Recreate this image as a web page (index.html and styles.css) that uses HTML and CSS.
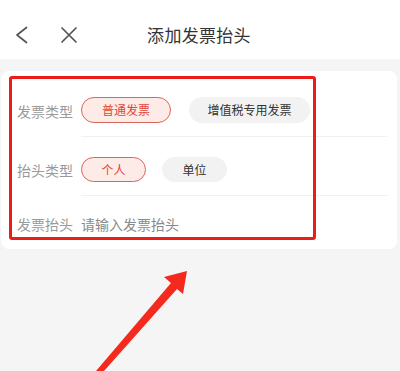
FILE: index.html
```html
<!DOCTYPE html>
<html lang="zh-CN">
<head>
<meta charset="utf-8">
<title>添加发票抬头</title>
<link rel="stylesheet" href="styles.css">
</head>
<body>
<div class="page">
  <header class="topbar">
    <div class="nav">
      <svg class="icon-back" width="14" height="18" viewBox="0 0 14 18"><polyline points="11.5,1.5 2,9 11.5,16.5" fill="none" stroke="#555" stroke-width="1.7" stroke-linecap="round" stroke-linejoin="round"/></svg>
      <svg class="icon-close" width="18" height="18" viewBox="0 0 18 18"><path d="M2 2 L16 16 M16 2 L2 16" fill="none" stroke="#555" stroke-width="1.7" stroke-linecap="round"/></svg>
    </div>
    <h1 class="title">添加发票抬头</h1>
    <div></div>
  </header>

  <section class="card">
    <div class="row row-type">
      <div class="label">发票类型</div>
      <div class="field gap18">
        <span class="pill wide active">普通发票</span>
        <span class="pill">增值税专用发票</span>
      </div>
    </div>
    <div class="row row-head">
      <div class="label">抬头类型</div>
      <div class="field gap16">
        <span class="pill small active">个人</span>
        <span class="pill small">单位</span>
      </div>
    </div>
    <div class="row row-input">
      <div class="label">发票抬头</div>
      <div class="field noline">
        <span class="placeholder">请输入发票抬头</span>
      </div>
    </div>
  </section>

  <div class="highlight"></div>
  <svg class="arrow" width="400" height="371" viewBox="0 0 400 371">
    <polygon points="187,271 164,277 171,283 96,371 104,371 177,289 183,294" fill="#f42a1e"/>
  </svg>
</div>
</body>
</html>
```

FILE: styles.css
```css
* { box-sizing: border-box; }
html, body { margin: 0; padding: 0; }
body {
  width: 400px;
  height: 371px;
  overflow: hidden;
  background: #f5f5f5;
  font-family: "Noto Sans CJK SC", "Noto Sans", sans-serif;
}
.page {
  position: relative;
  width: 400px;
  height: 371px;
  background: #f5f5f5;
}
.topbar {
  height: 59px;
  background: #fff;
  display: grid;
  grid-template-columns: 1fr auto 1fr;
  align-items: center;
  padding-top: 10px;
}
.nav {
  display: flex;
  align-items: center;
  padding-left: 15px;
}
.icon-close { margin-left: 31px; }
.title {
  margin: 0 0 0 -2px;
  font-size: 17px;
  font-weight: 400;
  color: #333;
  letter-spacing: 0.3px;
}
.card {
  margin: 12px 3px 0 1px;
  background: #fff;
  border-radius: 8px;
}
.row {
  display: flex;
  margin-left: 16px;
  margin-right: 10px;
}
.label {
  width: 64px;
  flex: none;
  display: flex;
  align-items: center;
  font-size: 14px;
  color: #9a9a9a;
  line-height: 20px;
}
.field {
  flex: 1;
  display: flex;
  align-items: center;
  border-bottom: 1px solid #f0f0f0;
}
.field.noline { border-bottom: none; }
.gap18 { gap: 18px; }
.gap16 { gap: 16px; }
.row-type > * { padding: 26px 0 13px; }
.row-head > * { padding: 20px 0 13px; }
.row-input > * { padding: 18px 0 15px; }
.pill {
  height: 26px;
  padding: 0 17.5px;
  border-radius: 13px;
  border: 1.5px solid transparent;
  background: #f2f2f2;
  color: #333;
  font-size: 12px;
  display: inline-flex;
  align-items: center;
  justify-content: center;
  line-height: 1;
}
.pill.wide { min-width: 90px; }
.pill.small {
  min-width: 65px;
  height: 25px;
}
.pill.active {
  background: #fdebe8;
  border-color: #d9665c;
  color: #e0463b;
}
.placeholder {
  font-size: 14px;
  color: #8a8a8a;
  line-height: 20px;
}
.highlight {
  position: absolute;
  left: 9px;
  top: 76px;
  width: 307px;
  height: 164px;
  border: 3px solid #ec1c18;
  border-radius: 3px;
  pointer-events: none;
}
.arrow {
  position: absolute;
  left: 0;
  top: 0;
  pointer-events: none;
}
```
